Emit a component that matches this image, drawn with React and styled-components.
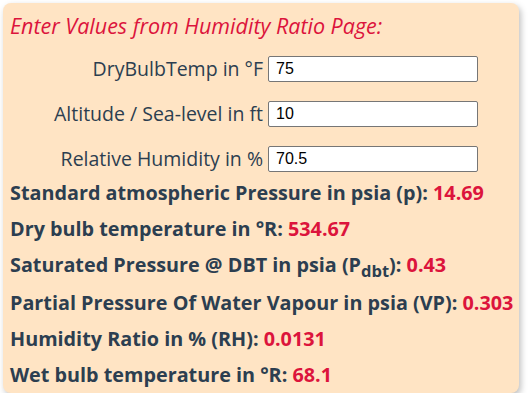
import React from 'react'
import styled, { createGlobalStyle } from 'styled-components'

const GlobalStyle = createGlobalStyle`
  body {
    margin: 0;
    background: #ffffff;
    font-family: 'Open Sans', 'Noto Sans', sans-serif;
    color: #2c3e50;
  }
`

const fields = [
  { label: 'DryBulbTemp in °F', value: '75' },
  { label: 'Altitude / Sea-level in ft', value: '10' },
  { label: 'Relative Humidity in %', value: '70.5' },
]

const Card = styled.div`
  margin: 3px 0 0 3px;
  width: 516px;
  height: 390px;
  box-sizing: border-box;
  background: #ffe4c4;
  border-radius: 8px;
  box-shadow: 2px 3px 6px rgba(0, 0, 0, 0.25);
  padding: 9px 7px 0 7px;
`

const Heading = styled.div`
  color: #dc143c;
  font-style: italic;
  font-size: 21.5px;
  line-height: 28px;
`

const Form = styled.div`
  display: grid;
  grid-template-columns: 253px 210px;
  column-gap: 5px;
  row-gap: 18px;
  align-items: center;
  margin-top: 15px;
`

const Label = styled.label`
  text-align: right;
  font-size: 19.5px;
  font-weight: 400;
  white-space: nowrap;
`

const Input = styled.input`
  box-sizing: border-box;
  width: 210px;
  height: 26px;
  border: 1px solid #767676;
  border-radius: 2px;
  padding: 1px 7px;
  font-family: 'Liberation Sans', Arial, sans-serif;
  font-size: 16px;
  color: #000;
  background: #fff;
`

const Results = styled.div`
  display: flex;
  flex-direction: column;
  margin-top: 3px;
`

const Line = styled.div`
  font-size: 19.8px;
  font-weight: 700;
  line-height: 36px;
  white-space: nowrap;
  height: ${p => (p.tall ? 38 : 36)}px;

  sub {
    line-height: 0;
  }
`

const Value = styled.span`
  color: #dc143c;
`

const results = [
  { label: 'Standard atmospheric Pressure in psia (p):', value: '14.69' },
  { label: 'Dry bulb temperature in °R:', value: '534.67' },
  {
    label: (
      <>
        Saturated Pressure @ DBT in psia (P<sub>dbt</sub>):
      </>
    ),
    value: '0.43',
    tall: true,
  },
  { label: 'Partial Pressure Of Water Vapour in psia (VP):', value: '0.303' },
  { label: 'Humidity Ratio in % (RH):', value: '0.0131' },
  { label: 'Wet bulb temperature in °R:', value: '68.1' },
]

export default function App() {
  return (
    <>
      <GlobalStyle />
      <Card>
        <Heading>Enter Values from Humidity Ratio Page:</Heading>
        <Form>
          {fields.map(f => (
            <React.Fragment key={f.label}>
              <Label>{f.label}</Label>
              <Input defaultValue={f.value} />
            </React.Fragment>
          ))}
        </Form>
        <Results>
          {results.map((r, i) => (
            <Line key={i} tall={r.tall}>
              {r.label} <Value>{r.value}</Value>
            </Line>
          ))}
        </Results>
      </Card>
    </>
  )
}
